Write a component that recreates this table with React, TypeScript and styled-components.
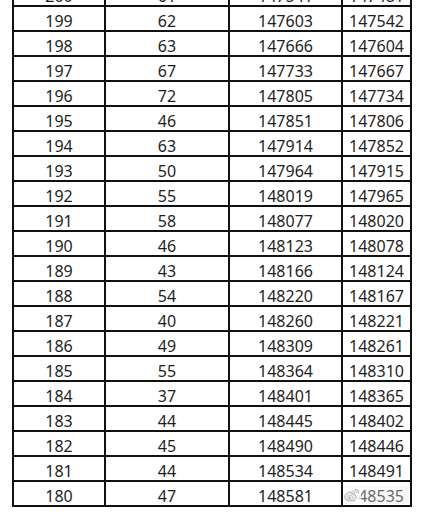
import React from 'react';
import styled, { createGlobalStyle } from 'styled-components';

const rows: [number, number, number, number][] = [
  [200, 61, 147541, 147481],
  [199, 62, 147603, 147542],
  [198, 63, 147666, 147604],
  [197, 67, 147733, 147667],
  [196, 72, 147805, 147734],
  [195, 46, 147851, 147806],
  [194, 63, 147914, 147852],
  [193, 50, 147964, 147915],
  [192, 55, 148019, 147965],
  [191, 58, 148077, 148020],
  [190, 46, 148123, 148078],
  [189, 43, 148166, 148124],
  [188, 54, 148220, 148167],
  [187, 40, 148260, 148221],
  [186, 49, 148309, 148261],
  [185, 55, 148364, 148310],
  [184, 37, 148401, 148365],
  [183, 44, 148445, 148402],
  [182, 45, 148490, 148446],
  [181, 44, 148534, 148491],
  [180, 47, 148581, 148535],
];

const widths = [92, 124, 113, 69];

const GlobalStyle = createGlobalStyle`
  html, body {
    margin: 0;
    padding: 0;
    background: #ffffff;
  }
  body {
    width: 435px;
    height: 518px;
    overflow: hidden;
    font-family: "Noto Sans", "Noto Sans CJK SC", sans-serif;
  }
`;

const Page = styled.div`
  position: relative;
  width: 435px;
  height: 518px;
  overflow: hidden;
  padding-left: 12px;
  box-sizing: border-box;
`;

const Table = styled.table`
  border-collapse: collapse;
  table-layout: fixed;
  margin-top: -20px;
`;

const Row = styled.tr`
  height: 25px;
`;

const Cell = styled.td`
  border: 2px solid #111111;
  padding: 4px 0 0 0;
  text-align: center;
  vertical-align: middle;
  font-size: 16px;
  line-height: 18px;
  color: #1e1e1e;
  white-space: nowrap;
  overflow: hidden;
`;

const Watermark = styled.div`
  position: absolute;
  left: 343px;
  top: 486px;
  width: 66px;
  height: 18px;
  display: flex;
  align-items: center;
  background: rgba(235, 235, 235, 0.35);
`;

const LogoBox = styled.div`
  display: flex;
  width: 18px;
  height: 16px;
  background: rgba(255, 255, 255, 0.75);
`;

const WeiboLogo = () => (
  <svg width="18" height="16" viewBox="0 0 24 20">
    <path
      d="M10 6c-4 0-8 3.5-8 7 0 3 3.5 5 8 5s8-2.4 8-5.2c0-1.6-1.6-2.2-2.4-2.4.6-1.4.3-2.6-1.6-2.4-1 .1-2 .6-2 .6.2-1.6-.6-2.6-2-2.6z"
      fill="#e8e8e8"
      stroke="#a0a0a0"
      strokeWidth="1"
    />
    <ellipse cx="9.5" cy="13.5" rx="3.6" ry="2.6" fill="#ffffff" stroke="#a8a8a8" strokeWidth="0.8" />
    <circle cx="9" cy="13.6" r="1.2" fill="#909090" />
    <path d="M16 2.5a5 5 0 0 1 5 5" stroke="#b0b0b0" strokeWidth="1.4" fill="none" />
    <path d="M16 5a2.4 2.4 0 0 1 2.5 2.5" stroke="#b0b0b0" strokeWidth="1.2" fill="none" />
  </svg>
);

export default function App() {
  return (
    <Page>
      <GlobalStyle />
      <Table>
        <colgroup>
          {widths.map((w, i) => (
            <col key={i} style={{ width: w }} />
          ))}
        </colgroup>
        <tbody>
          {rows.map((r) => (
            <Row key={r[0]}>
              {r.map((v, i) => (
                <Cell key={i}>{v}</Cell>
              ))}
            </Row>
          ))}
        </tbody>
      </Table>
      <Watermark>
        <LogoBox>
          <WeiboLogo />
        </LogoBox>
      </Watermark>
    </Page>
  );
}
